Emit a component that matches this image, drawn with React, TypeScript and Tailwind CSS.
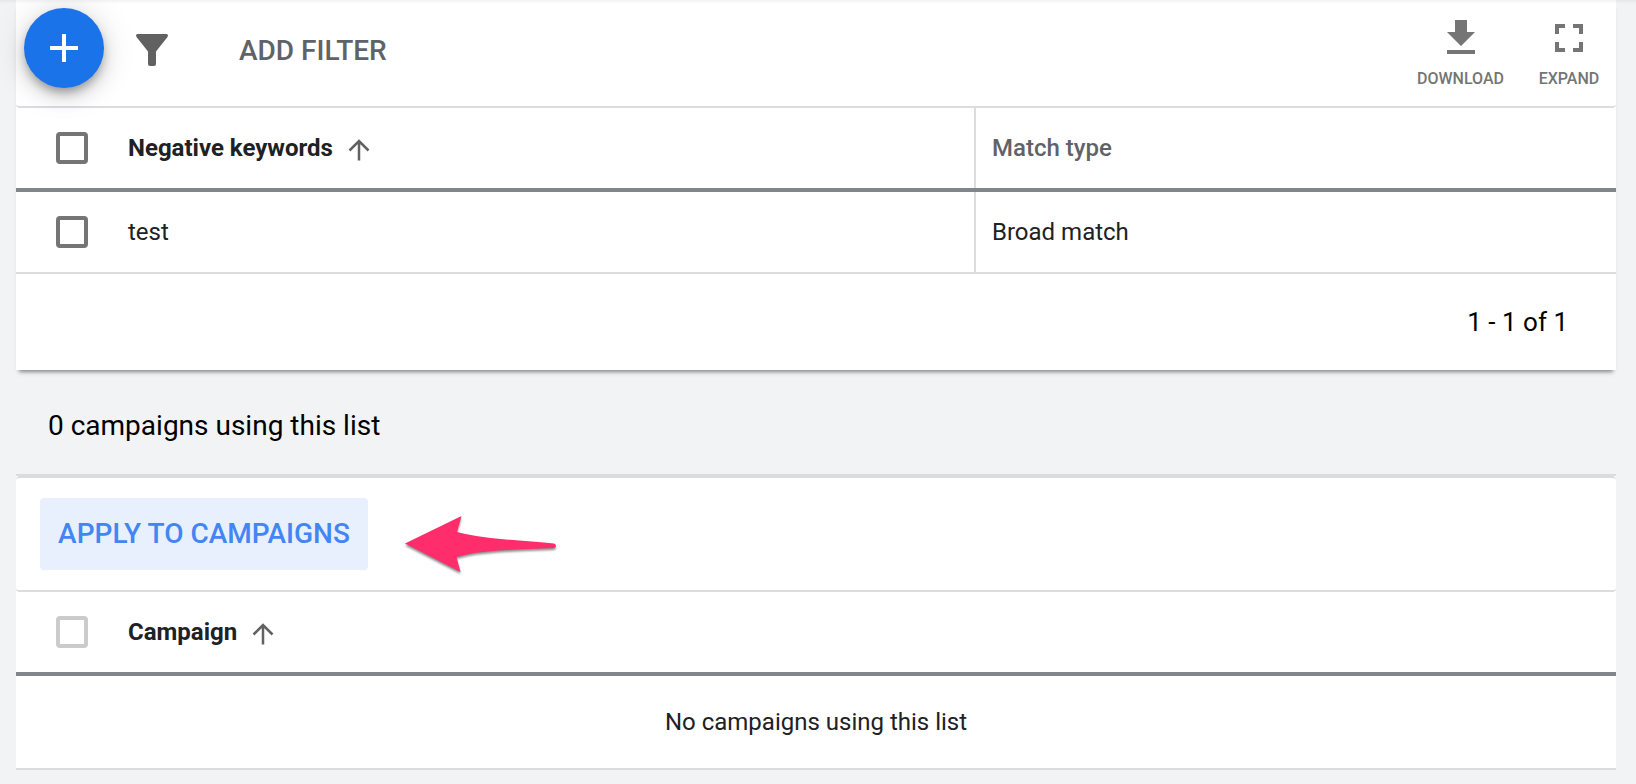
import { useState } from 'react';
import type { ReactNode } from 'react';

interface NegativeKeyword {
  id: number;
  text: string;
  matchType: string;
}

const keywords: NegativeKeyword[] = [{ id: 1, text: 'test', matchType: 'Broad match' }];

interface CheckboxProps {
  label: string;
  checked?: boolean;
  disabled?: boolean;
  onChange?: (checked: boolean) => void;
}

function Checkbox({ label, checked = false, disabled = false, onChange }: CheckboxProps) {
  return (
    <input
      type="checkbox"
      aria-label={label}
      checked={checked}
      disabled={disabled}
      onChange={(e) => onChange?.(e.target.checked)}
      className="block size-8 appearance-none rounded border-4 border-[#757575] checked:bg-[#1a73e8] disabled:border-[#cbcbcb]"
    />
  );
}

function SortArrow() {
  return (
    <svg className="mt-1 size-6" viewBox="0 0 24 24" fill="none" stroke="#616161" strokeWidth="2.5" aria-hidden="true">
      <path d="M12 22.500V3.500M2.500 12.500L12 3l9.500 9.500" />
    </svg>
  );
}

function ToolbarAction({ label, path }: { label: string; path: string }) {
  return (
    <button
      type="button"
      className="flex min-w-[62px] flex-col items-center text-base leading-[34px] font-medium text-[#757575]"
    >
      <svg className="size-12" viewBox="0 0 24 24" fill="currentColor" aria-hidden="true">
        <path d={path} />
      </svg>
      {label}
    </button>
  );
}

function SortHeader({ children }: { children: ReactNode }) {
  return (
    <button type="button" className="flex items-center gap-[14px] font-bold text-[#202124]">
      {children}
      <SortArrow />
    </button>
  );
}

export default function App() {
  const [selected, setSelected] = useState<number[]>([]);

  const toggle = (id: number, checked: boolean) => {
    setSelected((prev) => (checked ? [...prev, id] : prev.filter((x) => x !== id)));
  };

  return (
    <div className="relative min-h-screen bg-[#f1f3f4] pr-5 pl-4 font-[Roboto,sans-serif] text-2xl text-[#202124]">
      <div className="absolute inset-x-0 top-0 z-10 h-1 bg-linear-to-b from-black/5 to-transparent" />

      <section className="bg-white shadow-[0_5px_4px_-3px_rgba(60,64,67,0.6)]">
        <div className="flex h-27 items-start rounded-b border-b-2 border-[#dadce0] px-4">
          <button
            type="button"
            aria-label="Add negative keywords"
            className="mt-2 ml-[-8px] flex size-20 items-center justify-center rounded-full bg-[#1a73e8] shadow-[0_6px_10px_-2px_rgba(0,0,0,0.3),0_8px_20px_rgba(0,0,0,0.14),0_2px_36px_rgba(0,0,0,0.12)]"
          >
            <svg className="size-7" viewBox="0 0 28 28" fill="#fff" aria-hidden="true">
              <path d="M12 0h4v12h12v4H16v12h-4V16H0v-4h12z" />
            </svg>
          </button>
          <button type="button" aria-label="Filter" className="mt-[34px] ml-8">
            <svg className="size-8" viewBox="0 0 32 32" fill="#616161" aria-hidden="true">
              <path d="M1.5 0h29Q32 0 32 1.5L31.500 3 20 17.500V30q0 2-2 2h-4q-2 0-2-2V17.500L.5 3 0 1.500Q0 0 1.500 0z" />
            </svg>
          </button>
          <button type="button" className="mt-8 ml-[71px] text-[28px] leading-[38px] font-medium text-[#5f6368]">
            ADD FILTER
          </button>
          <div className="mt-[14px] ml-auto flex gap-[34px]">
            <ToolbarAction label="DOWNLOAD" path="M19 9h-4V3H9v6H5l7 7 7-7zM5 18v2h14v-2H5z" />
            <ToolbarAction
              label="EXPAND"
              path="M7 14H5v5h5v-2H7v-3zm-2-4h2V7h3V5H5v5zm12 7h-3v2h5v-5h-2v3zM14 5v2h3v3h2V5h-5z"
            />
          </div>
        </div>

        <table className="w-full table-fixed border-collapse text-left">
          <thead>
            <tr>
              <th className="w-28 p-0">
                <div className="flex h-21 items-center border-b-4 border-[#80868b] pl-10">
                  <Checkbox
                    label="Select all negative keywords"
                    checked={selected.length === keywords.length}
                    onChange={(checked) => setSelected(checked ? keywords.map((k) => k.id) : [])}
                  />
                </div>
              </th>
              <th className="p-0">
                <div className="border-b-4 border-[#80868b]">
                  <div className="flex h-20 items-center border-r-2 border-[#dadce0]">
                    <SortHeader>Negative keywords</SortHeader>
                  </div>
                </div>
              </th>
              <th className="w-2/5 p-0">
                <div className="flex h-21 items-center border-b-4 border-[#80868b] pl-4 font-medium text-[#5f6368]">
                  Match type
                </div>
              </th>
            </tr>
          </thead>
          <tbody>
            {keywords.map((keyword) => (
              <tr key={keyword.id}>
                <td className="p-0">
                  <div className="flex h-[82px] items-center border-b-2 border-[#dadce0] pl-10">
                    <Checkbox
                      label={`Select ${keyword.text}`}
                      checked={selected.includes(keyword.id)}
                      onChange={(checked) => toggle(keyword.id, checked)}
                    />
                  </div>
                </td>
                <td className="p-0">
                  <div className="flex h-[82px] items-center border-r-2 border-b-2 border-[#dadce0]">
                    {keyword.text}
                  </div>
                </td>
                <td className="p-0">
                  <div className="flex h-[82px] items-center border-b-2 border-[#dadce0] pl-4">
                    {keyword.matchType}
                  </div>
                </td>
              </tr>
            ))}
          </tbody>
        </table>

        <div className="flex h-24 items-center justify-end pr-12 text-[26px] text-black">1 - 1 of 1</div>
      </section>

      <h2 className="flex h-26 items-center px-8 pt-2 text-[28px] text-black">0 campaigns using this list</h2>

      <section className="border-y-2 border-[#dadce0] bg-white">
        <div className="flex h-29 items-center rounded border-y-2 border-[#dadce0] pl-6">
          <button
            type="button"
            className="h-18 min-w-82 rounded bg-[#e8f0fe] px-4 text-[28px] font-medium text-[#4285f4]"
          >
            APPLY TO CAMPAIGNS
          </button>
          <svg
            className="ml-8 h-28 w-40 drop-shadow-[0_2px_1px_rgba(0,0,0,0.45)]"
            viewBox="0 0 160 112"
            fill="#ff2d6b"
            aria-hidden="true"
          >
            <path d="M5 65.500L61.500 38L57 54C82 61 118 62 154 65.500Q156 66 156 68Q156 70 153.500 70C120 72 82 71 56.500 79L60.500 94z" />
          </svg>
        </div>

        <table className="w-full table-fixed border-collapse text-left">
          <thead>
            <tr>
              <th className="w-28 p-0">
                <div className="flex h-21 items-center border-b-4 border-[#80868b] pl-10">
                  <Checkbox label="Select all campaigns" disabled />
                </div>
              </th>
              <th className="p-0">
                <div className="flex h-21 items-center border-b-4 border-[#80868b]">
                  <SortHeader>Campaign</SortHeader>
                </div>
              </th>
            </tr>
          </thead>
          <tbody>
            <tr>
              <td colSpan={2} className="h-23 p-0 text-center">
                No campaigns using this list
              </td>
            </tr>
          </tbody>
        </table>
      </section>
    </div>
  );
}
